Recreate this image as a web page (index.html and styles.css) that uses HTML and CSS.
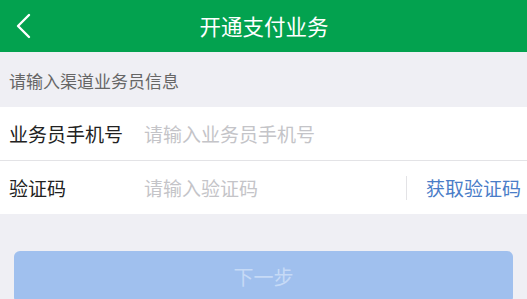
FILE: index.html
```html
<!DOCTYPE html>
<html lang="zh-CN">
<head>
<meta charset="utf-8">
<link rel="stylesheet" href="styles.css">
</head>
<body>
<div class="page">
  <header class="nav">
    <span class="back">
      <svg width="16" height="26" viewBox="0 0 16 26"><polyline points="13,2 2,13 13,24" fill="none" stroke="#fff" stroke-width="2.4" stroke-linecap="round" stroke-linejoin="round"/></svg>
    </span>
    <h1 class="title">开通支付业务</h1>
  </header>
  <div class="section-title">请输入渠道业务员信息</div>
  <div class="form">
    <div class="row">
      <span class="label">业务员手机号</span>
      <span class="placeholder">请输入业务员手机号</span>
    </div>
    <div class="row">
      <span class="label">验证码</span>
      <span class="placeholder grow">请输入验证码</span>
      <span class="vline"></span>
      <span class="code">获取验证码</span>
    </div>
  </div>
  <div class="actions">
    <button class="next">下一步</button>
  </div>
</div>
</body>
</html>
```
FILE: styles.css
```css
* { box-sizing: border-box; }
html, body { margin: 0; padding: 0; }
body {
  width: 527px;
  height: 299px;
  overflow: hidden;
  background: #efeff4;
  font-family: "Noto Sans CJK SC", "Noto Sans", sans-serif;
}
.page { display: flex; flex-direction: column; }
.nav {
  height: 52px;
  background: #03a24f;
  display: flex;
  align-items: center;
  justify-content: center;
  position: relative;
}
.back {
  position: absolute;
  left: 16px;
  top: 13px;
  display: flex;
}
.title {
  margin: 0;
  font-size: 21.5px;
  font-weight: normal;
  color: #fff;
  line-height: 1;
  padding-left: 1px;
}
.section-title {
  height: 55px;
  display: flex;
  align-items: center;
  padding-left: 9px;
  padding-top: 2px;
  font-size: 17px;
  color: #666;
}
.form { background: #fff; }
.row {
  height: 53px;
  display: flex;
  align-items: center;
  padding-left: 9px;
  padding-right: 6px;
}
.row + .row { border-top: 1px solid #e3e3e6; height: 54px; }
.label {
  width: 135px;
  font-size: 19px;
  color: #222;
}
.placeholder {
  font-size: 19px;
  color: #c4c4c8;
}
.grow { flex: 1; }
.vline {
  width: 1px;
  height: 24px;
  background: #e3e3e6;
  margin-right: 19px;
}
.code {
  font-size: 19px;
  color: #4a7dc8;
}
.actions { padding: 37px 14px 0 14px; }
.next {
  width: 100%;
  height: 52px;
  border: none;
  border-radius: 6px;
  background: #a0c0ee;
  color: #c6daf6;
  font-family: "Noto Sans CJK SC", sans-serif;
  font-size: 20px;
  padding: 0 0 2px 0;
}
```
